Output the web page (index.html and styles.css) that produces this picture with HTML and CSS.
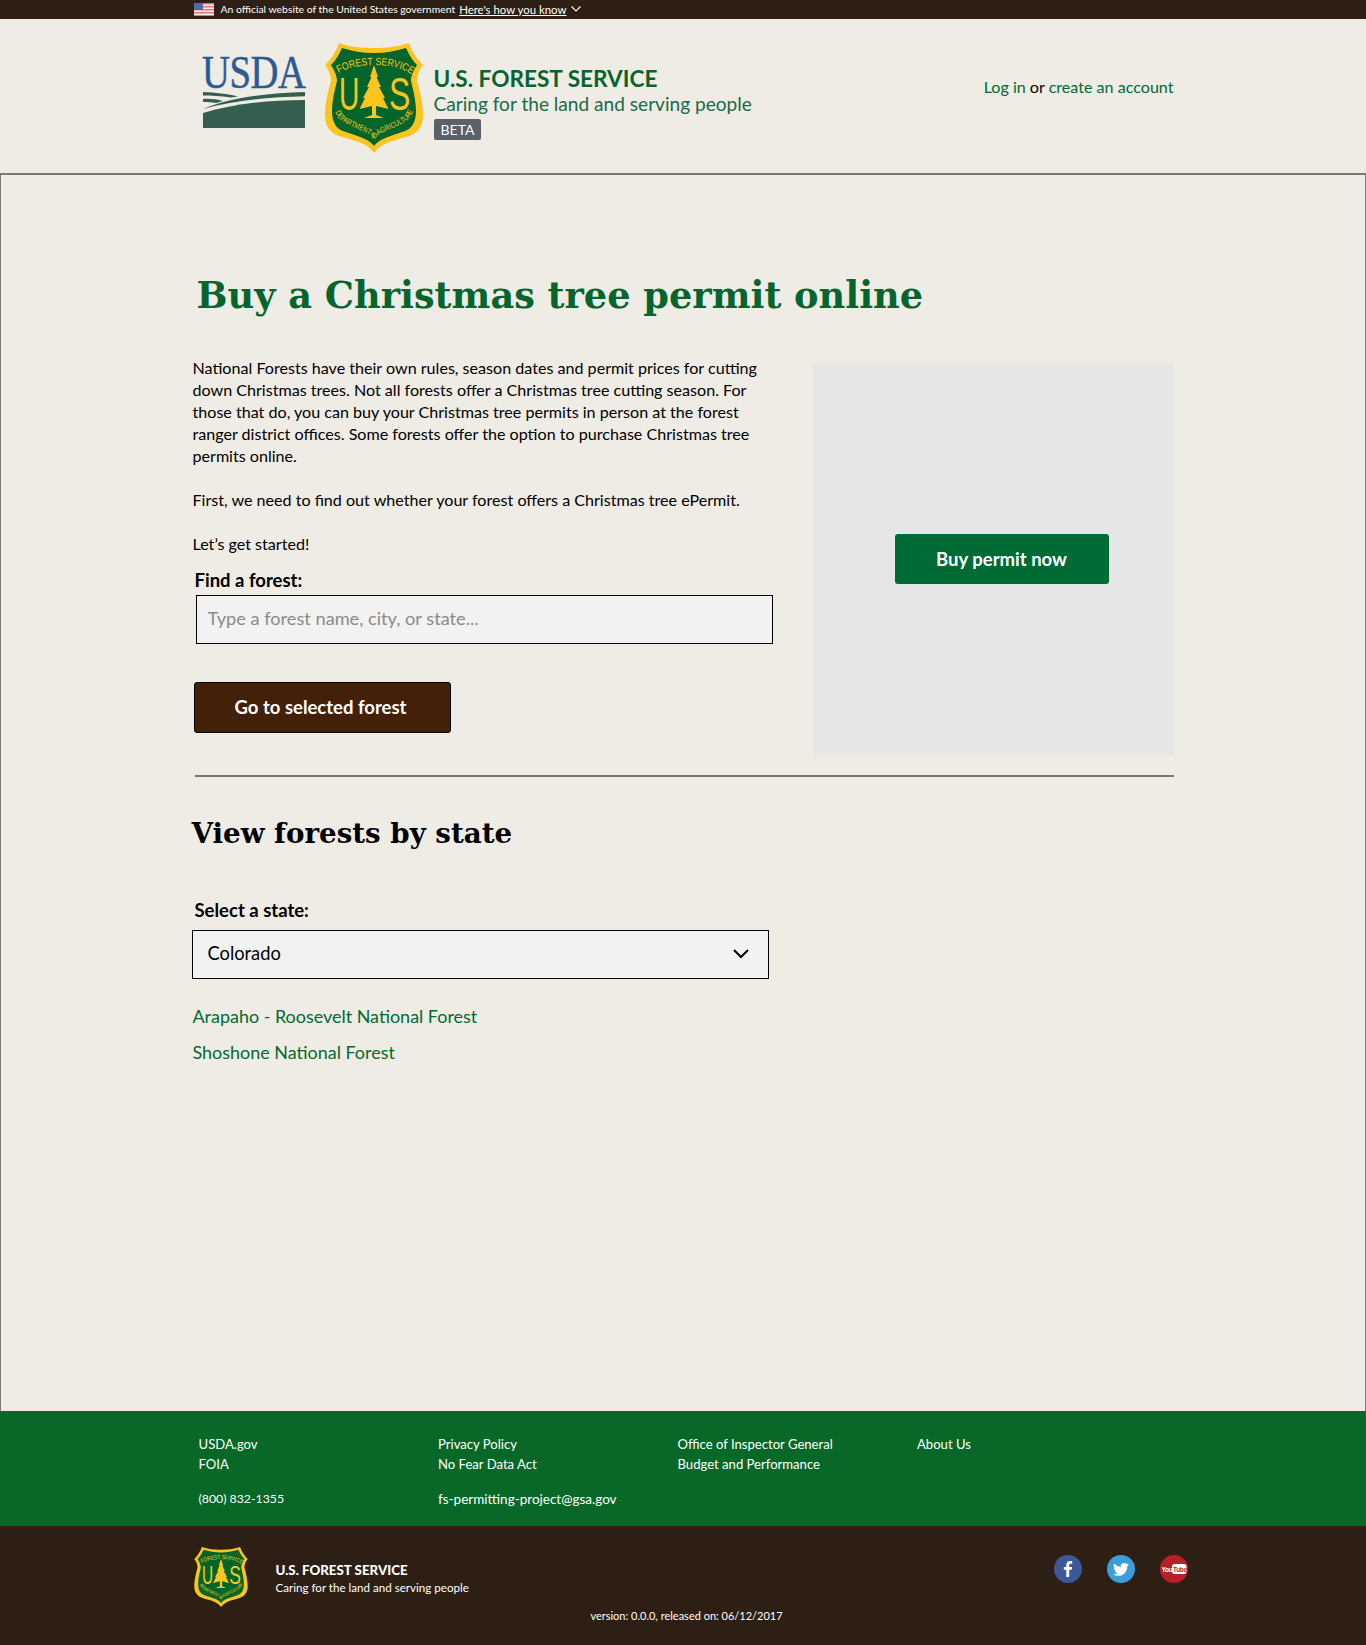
FILE: index.html
```html
<!DOCTYPE html>
<html lang="en">
<head>
    <meta charset="UTF-8">
    <meta name="viewport" content="width=device-width, initial-scale=1.0">
    <title>Buy a Christmas tree permit online</title>
    <link rel="stylesheet" href="styles.css">
</head>
<body>
    <div class="gov-banner">
        <div class="container gov-inner">
            <svg class="flag" viewBox="0 0 20 13" width="20" height="13">
                <rect width="20" height="13" fill="#f4f0f0"/>
                <path fill="#e0766f" d="M0 0h20v1.500H0zM0 3h20v1.500H0zM0 6h20v1.500H0zM0 9h20v1.500H0zM0 12h20v1H0z"/>
                <rect width="9" height="7" fill="#5a68a8"/>
            </svg>
            <span class="gov-text">An official website of the United States government</span>
            <a class="gov-link" href="#">Here's how you know</a>
            <svg class="gov-chevron" viewBox="0 0 10 6" width="10" height="6"><path d="M.5.5 5 5 9.500.5" fill="none" stroke="#fff" stroke-width="1.100"/></svg>
        </div>
    </div>

    <header class="site-header">
        <div class="container header-inner">
            <div class="usda-logo">
                <span class="usda-word">USDA</span>
                <svg viewBox="0 0 102 36" width="102" height="36">
                    <path fill="#345f50" d="M0 0C12 .5 25 2 35 4.500L28 5.500C18 4 8 3.500 0 3.500Z"/>
                    <path fill="#345f50" d="M0 7C7 6.500 14 7.500 20 9L13 11C9 10 4 10 0 10Z"/>
                    <path fill="#345f50" d="M102 0V4.300C65 5 30 9 0 17C25 6 65 1 102 0Z"/>
                    <path fill="#345f50" d="M0 21C30 12 65 8 102 8V36H0Z"/>
                </svg>
            </div>
            <svg class="fs-shield" viewBox="0 0 98 110">
                <path fill="#fcc41e" d="M14 0C25 4 37 5 49 5C61 5 72 4 84 0C87 9 92 16 98 22C94 27 92 32 92 38C94 45 98 60 98 72C98 84 92 90 84 93C76 96 64 98 58 102C54 104 51 107 49 110C47 107 44 104 40 102C34 98 22 96 14 93C6 90 0 84 0 72C0 60 4 45 6 38C6 32 4 27 0 22C6 16 11 9 14 0Z"/>
                <path fill="#04652a" d="M17 5C27 8 38 10 49 10C60 10 71 8 81 5C84 12 88 18 92 22C89 27 86 32 86 38C88 46 91 58 91 68C91 80 86 86 80 88C72 91 64 93 58 96C54 98 51 100 49 103C47 100 44 98 40 96C34 93 26 91 18 88C12 86 7 80 7 68C7 58 10 46 12 38C12 32 9 27 6 22C10 18 14 12 17 5Z"/>
                <path id="top-arc" fill="none" d="M12 31C30 19 68 19 86 31"/>
                <path id="bottom-arc" fill="none" d="M10 68C14 84 38 84 49 96C60 84 84 84 88 68"/>
                <text class="seal-top" textLength="76" lengthAdjust="spacingAndGlyphs"><textPath href="#top-arc" startOffset="2">FOREST SERVICE</textPath></text>
                <text class="seal-bottom" textLength="98" lengthAdjust="spacingAndGlyphs"><textPath href="#bottom-arc" startOffset="1">DEPARTMENT OF AGRICULTURE</textPath></text>
                <text class="seal-letter" transform="translate(14 67) scale(.6 1)">U</text>
                <text class="seal-letter" transform="translate(64 67) scale(.68 1)">S</text>
                <path fill="#fcc41e" d="M49 22L53 34H51.500L56 44H54L60 55H58L63.500 66L51 63V72L59 75H39L47 72V63L34.500 66L40 55H38L44 44H42L46.500 34H45Z"/>
            </svg>
            <div class="agency">
                <div class="agency-name">U.S. FOREST SERVICE</div>
                <div class="agency-tag">Caring for the land and serving people</div>
                <span class="beta">BETA</span>
            </div>
            <div class="account"><a href="#">Log in</a> or <a href="#">create an account</a></div>
        </div>
    </header>

    <main class="content">
        <div class="container">
            <h1>Buy a Christmas tree permit online</h1>
            <div class="intro">
                <div class="intro-left">
                    <p>National Forests have their own rules, season dates and permit prices for cutting down Christmas trees. Not all forests offer a Christmas tree cutting season. For those that do, you can buy your Christmas tree permits in person at the forest ranger district offices. Some forests offer the option to purchase Christmas tree permits online.</p>
                    <p>First, we need to find out whether your forest offers a Christmas tree ePermit.</p>
                    <p>Let’s get started!</p>
                    <label class="field-label" for="forest">Find a forest:</label>
                    <input class="forest-input" id="forest" type="text" placeholder="Type a forest name, city, or state...">
                    <button class="btn-brown" type="button">Go to selected forest</button>
                </div>
                <div class="promo">
                    <button class="btn-green" type="button">Buy permit now</button>
                </div>
            </div>
            <hr class="divider">
            <h2>View forests by state</h2>
            <label class="field-label state-label" for="state">Select a state:</label>
            <div class="select-wrap">
                <select class="state-select" id="state">
                    <option>Colorado</option>
                </select>
                <svg class="select-arrow" viewBox="0 0 16 10" width="16" height="10"><path d="M1 1l7 7 7-7" fill="none" stroke="#000" stroke-width="2"/></svg>
            </div>
            <ul class="forest-list">
                <li><a href="#">Arapaho - Roosevelt National Forest</a></li>
                <li><a href="#">Shoshone National Forest</a></li>
            </ul>
        </div>
    </main>

    <footer>
        <div class="footer-links">
            <div class="container footer-grid">
                <div>
                    <a href="#">USDA.gov</a>
                    <a href="#">FOIA</a>
                    <span class="phone">(800) 832-1355</span>
                </div>
                <div>
                    <a href="#">Privacy Policy</a>
                    <a href="#">No Fear Data Act</a>
                    <a class="email" href="#">fs-permitting-project@gsa.gov</a>
                </div>
                <div>
                    <a href="#">Office of Inspector General</a>
                    <a href="#">Budget and Performance</a>
                </div>
                <div>
                    <a href="#">About Us</a>
                </div>
            </div>
        </div>
        <div class="footer-brand">
            <div class="container brand-row">
                <svg class="brand-shield" viewBox="0 0 98 110">
                    <path fill="#fcc41e" d="M14 0C25 4 37 5 49 5C61 5 72 4 84 0C87 9 92 16 98 22C94 27 92 32 92 38C94 45 98 60 98 72C98 84 92 90 84 93C76 96 64 98 58 102C54 104 51 107 49 110C47 107 44 104 40 102C34 98 22 96 14 93C6 90 0 84 0 72C0 60 4 45 6 38C6 32 4 27 0 22C6 16 11 9 14 0Z"/>
                    <path fill="#04652a" d="M17 5C27 8 38 10 49 10C60 10 71 8 81 5C84 12 88 18 92 22C89 27 86 32 86 38C88 46 91 58 91 68C91 80 86 86 80 88C72 91 64 93 58 96C54 98 51 100 49 103C47 100 44 98 40 96C34 93 26 91 18 88C12 86 7 80 7 68C7 58 10 46 12 38C12 32 9 27 6 22C10 18 14 12 17 5Z"/>
                    <path id="top-arc-small" fill="none" d="M12 31C30 19 68 19 86 31"/>
                    <path id="bottom-arc-small" fill="none" d="M10 68C14 84 38 84 49 96C60 84 84 84 88 68"/>
                    <text class="seal-top" textLength="76" lengthAdjust="spacingAndGlyphs"><textPath href="#top-arc-small" startOffset="2">FOREST SERVICE</textPath></text>
                    <text class="seal-bottom" textLength="98" lengthAdjust="spacingAndGlyphs"><textPath href="#bottom-arc-small" startOffset="1">DEPARTMENT OF AGRICULTURE</textPath></text>
                    <text class="seal-letter" transform="translate(14 67) scale(.6 1)">U</text>
                    <text class="seal-letter" transform="translate(64 67) scale(.68 1)">S</text>
                    <path fill="#fcc41e" d="M49 22L53 34H51.500L56 44H54L60 55H58L63.500 66L51 63V72L59 75H39L47 72V63L34.500 66L40 55H38L44 44H42L46.500 34H45Z"/>
                </svg>
                <div class="brand-text">
                    <strong>U.S. FOREST SERVICE</strong>
                    <span>Caring for the land and serving people</span>
                </div>
                <div class="social">
                    <svg viewBox="0 0 28 28" width="28" height="28"><circle cx="14" cy="14" r="14" fill="#3b5998"/><path fill="#fff" d="M15.200 22v-7.200h2.500l.4-2.900h-2.900v-1.800c0-.8.300-1.400 1.500-1.400h1.500V6.100c-.3 0-1.200-.1-2.200-.1-2.200 0-3.700 1.300-3.700 3.800v2.100H9.800v2.900h2.500V22z"/></svg>
                    <svg viewBox="0 0 28 28" width="28" height="28"><circle cx="14" cy="14" r="14" fill="#3d9ddb"/><path fill="#fff" transform="translate(6 6.500) scale(.66)" d="M23.950 4.570a10 10 0 0 1-2.820.77 4.960 4.960 0 0 0 2.160-2.720 9.900 9.900 0 0 1-3.120 1.180 4.920 4.920 0 0 0-8.380 4.480A13.940 13.940 0 0 1 1.670 3.150a4.920 4.920 0 0 0 1.520 6.570 4.900 4.900 0 0 1-2.230-.61v.06a4.920 4.920 0 0 0 3.950 4.830 5 5 0 0 1-2.210.08 4.940 4.940 0 0 0 4.600 3.420A9.870 9.870 0 0 1 0 19.540a13.940 13.940 0 0 0 7.550 2.210c9.050 0 14-7.500 14-13.980 0-.21 0-.42-.02-.63a9.940 9.940 0 0 0 2.460-2.550z"/></svg>
                    <svg viewBox="0 0 28 28" width="28" height="28"><circle cx="14" cy="14" r="14" fill="#b71f29"/><text class="yt-you" x="1.500" y="16.500">You</text><rect x="12" y="9" width="14.500" height="10" rx="2.500" fill="#fff"/><text class="yt-tube" x="13" y="16.500">Tube</text></svg>
                </div>
            </div>
            <div class="version">version: 0.0.0, released on: 06/12/2017</div>
        </div>
    </footer>
</body>
</html>
```

FILE: styles.css
```css
body {
    margin: 0;
    padding: 0;
    font-family: 'Lato', 'Open Sans', sans-serif;
    font-size: 16px;
    color: #000;
    background-color: #efece5;
}

a {
    color: #006b2f;
    text-decoration: none;
}

.container {
    width: 981px;
    margin: 0 auto;
}

/* gov banner */
.gov-banner {
    height: 19px;
    background-color: #2d1f14;
    color: #fff;
    font-size: 10.400px;
}

.gov-inner {
    display: flex;
    align-items: center;
    height: 18px;
}

.flag {
    margin-left: 1px;
    margin-right: 7px;
}

.gov-link {
    margin-left: 4px;
    color: #fff;
    font-size: 11.400px;
    text-decoration: underline;
}

.gov-chevron {
    margin-left: 5px;
}

/* header */
.site-header {
    height: 154px;
    border-bottom: 2px solid #7a7873;
}

.header-inner {
    display: flex;
    align-items: flex-start;
}

.usda-logo {
    width: 102px;
    margin: 34px 20px 0 10px;
    line-height: 1;
}

.usda-word {
    display: block;
    height: 39px;
    margin-left: -1px;
    font-family: 'Liberation Serif', serif;
    font-size: 46px;
    line-height: 40px;
    letter-spacing: -.5px;
    color: #2b5a94;
    -webkit-text-stroke: .5px #2b5a94;
    transform: scaleX(.84);
    transform-origin: left;
}

.usda-logo svg {
    display: block;
}

.fs-shield {
    width: 98px;
    height: 110px;
    margin-top: 24px;
    margin-right: 11px;
}

.seal-top {
    font-family: 'Liberation Sans', sans-serif;
    font-size: 10.500px;
    fill: #fcc41e;
}

.seal-bottom {
    font-family: 'Liberation Sans', sans-serif;
    font-size: 8px;
    fill: #fcc41e;
}

.seal-letter {
    font-family: 'Liberation Sans', sans-serif;
    font-size: 47px;
    fill: #fcc41e;
}

.agency {
    margin-top: 47px;
    color: #05652d;
}

.agency-name {
    font-size: 22.600px;
    font-weight: 700;
    line-height: 26px;
}

.agency-tag {
    font-size: 19.100px;
    line-height: 23px;
    color: #1a6b48;
}

.beta {
    display: inline-block;
    margin-top: 4px;
    padding: 0 7px;
    height: 21px;
    line-height: 21px;
    font-size: 14px;
    color: #fff;
    background-color: #5b616b;
    border-radius: 2px;
}

.account {
    margin-left: auto;
    margin-top: 58px;
    font-size: 16.100px;
    line-height: 20px;
}

/* main */
.content {
    height: 1236px;
    box-sizing: border-box;
    border-left: 1px solid #7a7873;
    border-right: 1px solid #7a7873;
}

h1 {
    margin: 0;
    padding: 97px 0 0 4px;
    height: 85px;
    font-family: 'DejaVu Serif', serif;
    font-size: 36.700px;
    font-weight: 700;
    line-height: 48px;
    color: #05652d;
}

.intro {
    display: flex;
    justify-content: space-between;
}

.intro-left {
    width: 590px;
}

.intro-left p {
    margin: 0 0 22px;
    font-size: 16.100px;
    line-height: 22px;
}

.intro-left p:nth-of-type(3) {
    margin-bottom: 14px;
}

.field-label {
    display: block;
    margin-left: 2px;
    font-size: 18.500px;
    font-weight: 700;
    line-height: 22px;
}

.forest-input {
    display: block;
    box-sizing: border-box;
    width: 577px;
    height: 49px;
    margin: 4px 0 0 3px;
    padding: 0 11px 3px;
    border: 1px solid #000;
    background-color: #f2f2f2;
    font-family: inherit;
    font-size: 18.200px;
}

.forest-input::placeholder {
    color: #8b8b8b;
}

.btn-brown {
    display: block;
    width: 257px;
    height: 51px;
    margin: 38px 0 0 1px;
    border: 1px solid #000;
    border-radius: 3px;
    background-color: #432108;
    color: #fff;
    font-family: inherit;
    font-size: 18.500px;
    font-weight: 700;
    padding: 0 3px 2px 0;
}

.promo {
    display: flex;
    align-items: center;
    width: 361px;
    height: 392px;
    margin-top: 6px;
    background-color: #e6e6e6;
}

.btn-green {
    width: 214px;
    height: 50px;
    margin-left: 82px;
    border: none;
    border-radius: 3px;
    background-color: #006b35;
    color: #fff;
    font-family: inherit;
    font-size: 18.500px;
    font-weight: 700;
}

.divider {
    height: 2px;
    margin: 20px 0 0 2px;
    border: none;
    background-color: #7a7873;
}

h2 {
    margin: 0 0 0 -1px;
    padding-top: 37px;
    height: 86px;
    box-sizing: border-box;
    font-family: 'DejaVu Serif', serif;
    font-size: 27.700px;
    font-weight: 700;
    line-height: 40px;
}

.state-label {
    margin-top: 36px;
}

.select-wrap {
    position: relative;
    width: 577px;
    margin: 9px 0 0 -1px;
}

.state-select {
    display: block;
    width: 100%;
    height: 49px;
    padding: 0 15px 4px;
    border: 1px solid #000;
    border-radius: 0;
    background-color: #f2f2f2;
    font-family: inherit;
    font-size: 18.300px;
    color: #000;
    appearance: none;
}

.select-arrow {
    position: absolute;
    top: 19px;
    right: 20px;
}

.forest-list {
    list-style: none;
    margin: 25px 0 0 0;
    padding: 0;
    font-size: 17.950px;
    line-height: 24px;
}

.forest-list li {
    margin-bottom: 12px;
}

/* footer */
.footer-links {
    height: 115px;
    background-color: #086828;
    font-size: 13.100px;
    line-height: 20px;
}

.footer-grid {
    display: grid;
    grid-template-columns: repeat(4, 239.500px);
    padding-top: 23px;
}

.footer-grid > div {
    padding-left: 6px;
}

.footer-grid a,
.footer-grid span {
    display: block;
    color: #fff;
}

.footer-grid .phone {
    margin-top: 15px;
    font-size: 12.300px;
}

.footer-grid .email {
    margin-top: 15px;
    font-size: 13.500px;
}

.footer-brand {
    height: 119px;
    background-color: #2d1f14;
    color: #fff;
}

.brand-row {
    display: flex;
    align-items: flex-start;
    height: 78px;
}

.brand-shield {
    width: 54px;
    height: 60px;
    margin: 21px 28px 0 1px;
}

.brand-text {
    margin-top: 36px;
    font-size: 11.600px;
    line-height: 17px;
}

.brand-text strong,
.brand-text span {
    display: block;
}

.brand-text strong {
    font-size: 13.300px;
    font-weight: 900;
}

.social {
    display: flex;
    gap: 25px;
    margin-top: 29px;
    margin-left: auto;
    margin-right: -14px;
}

.yt-you,
.yt-tube {
    font-family: 'Liberation Sans', sans-serif;
    font-size: 6.500px;
    font-weight: 700;
}

.yt-you {
    fill: #fff;
    letter-spacing: -.4px;
}

.yt-tube {
    fill: #b71f29;
    letter-spacing: -.3px;
}

.version {
    margin-left: 7px;
    padding-top: 4px;
    font-size: 11px;
    line-height: 16px;
    text-align: center;
}
```
